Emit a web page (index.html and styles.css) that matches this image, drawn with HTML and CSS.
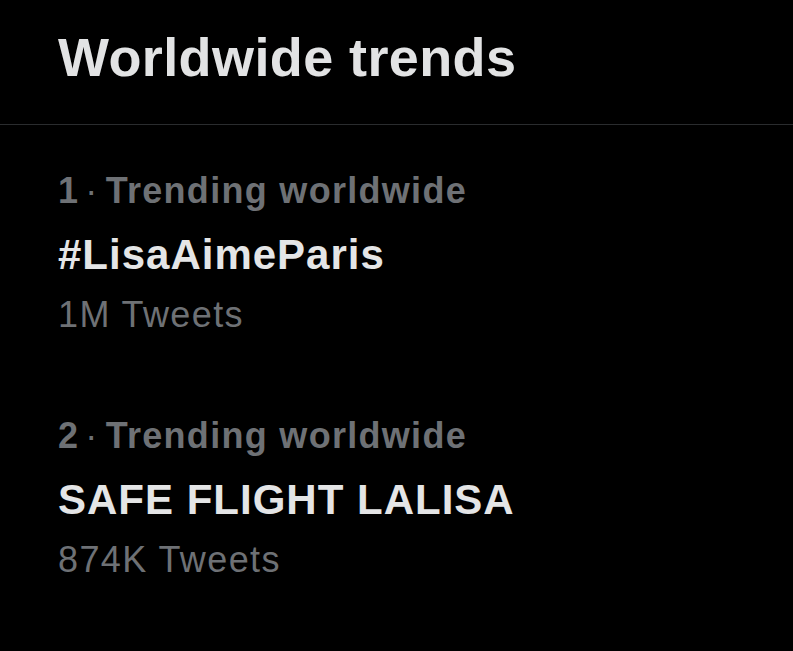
FILE: index.html
```html
<!DOCTYPE html>
<html>
<head>
<meta charset="utf-8">
<link rel="stylesheet" href="styles.css">
</head>
<body>
<div class="panel">
  <header class="header">
    <h1 class="title">Worldwide trends</h1>
  </header>
  <div class="trends">
    <div class="trend">
      <div class="label"><span class="rank">1</span><span class="dot">·</span>Trending worldwide</div>
      <div class="name">#LisaAimeParis</div>
      <div class="count">1M Tweets</div>
    </div>
    <div class="trend">
      <div class="label"><span class="rank">2</span><span class="dot">·</span>Trending worldwide</div>
      <div class="name">SAFE FLIGHT LALISA</div>
      <div class="count">874K Tweets</div>
    </div>
  </div>
</div>
</body>
</html>
```
FILE: styles.css
```css
html, body {
  margin: 0;
  padding: 0;
  background: #000;
}
body {
  width: 793px;
  height: 651px;
  overflow: hidden;
  font-family: "Liberation Sans", Arial, sans-serif;
}
.header {
  height: 125px;
  box-sizing: border-box;
  padding: 25px 0 0 58px;
  border-bottom: 1px solid #2a2c2e;
}
.title {
  margin: 0;
  font-size: 54px;
  line-height: 64px;
  font-weight: 700;
  color: #e2e3e4;
  letter-spacing: 0.4px;
}
.trends {
  display: flex;
  flex-direction: column;
  gap: 76px;
  padding: 44px 0 0 58px;
}
.label {
  font-size: 36px;
  line-height: 44px;
  font-weight: 700;
  color: #6e7175;
  letter-spacing: 1.3px;
}
.dot {
  font-weight: 400;
  margin: 0 7px 0 6px;
}
.name {
  margin-top: 17px;
  font-size: 42px;
  line-height: 50px;
  font-weight: 700;
  color: #e4e5e6;
  letter-spacing: 1px;
}
.count {
  margin-top: 12px;
  font-size: 36px;
  line-height: 46px;
  font-weight: 400;
  color: #6e7175;
  letter-spacing: 1.4px;
}
```
